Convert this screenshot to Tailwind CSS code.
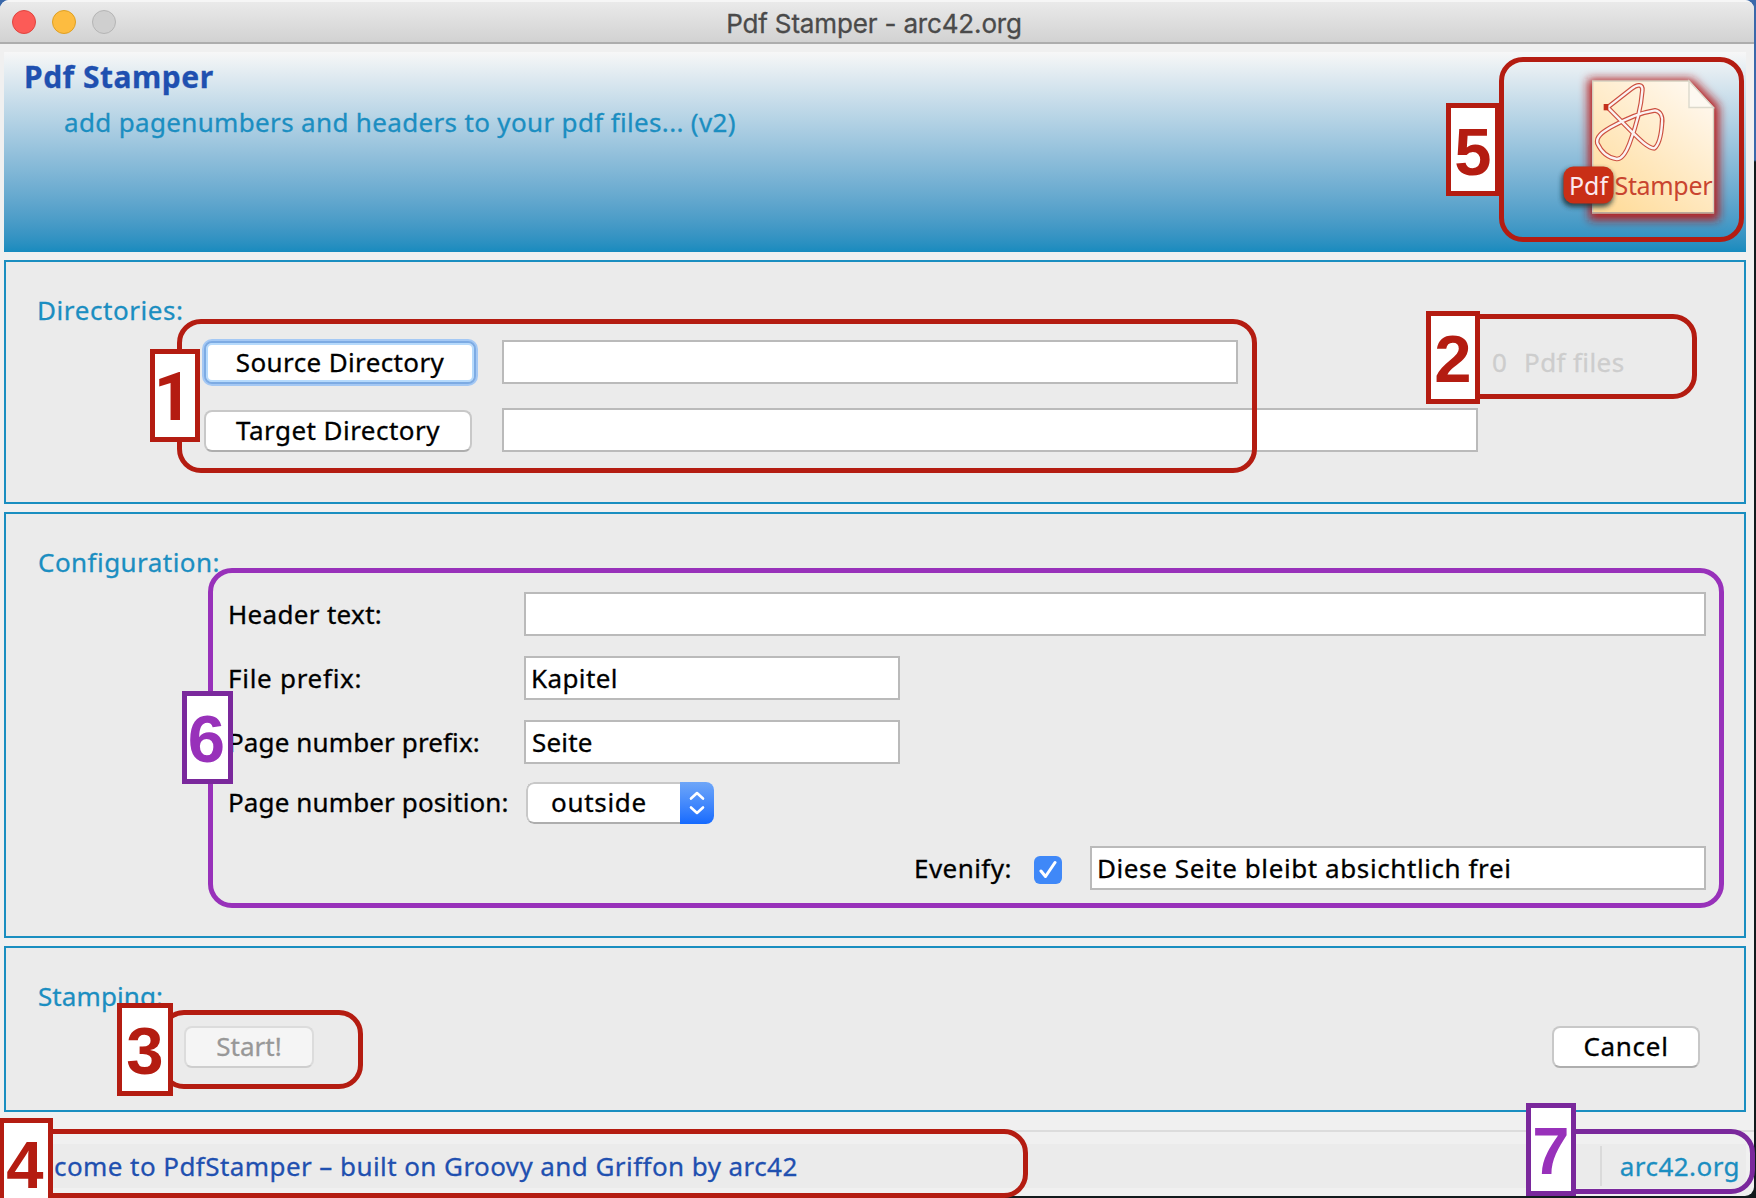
<!DOCTYPE html>
<html lang="en">
<head>
<meta charset="utf-8">
<title>Pdf Stamper - arc42.org</title>
<script src="https://cdn.jsdelivr.net/npm/@tailwindcss/browser@4"></script>
</head>
<body class="overflow-hidden">
<div class="relative w-[1756px] h-[1198px] overflow-hidden bg-linear-to-b from-[#3a68aa] from-[160px] to-[#121a1c] to-[162px] font-['Noto_Sans',sans-serif] text-[26px] leading-9 text-black whitespace-nowrap">

  <!-- application window -->
  <div class="w-[1754px] h-[1196px] flex flex-col bg-[#f0f0f0] rounded-t-[9px] rounded-br-[9px] overflow-hidden [-webkit-text-stroke:0.3px]">
    <header class="relative h-11 shrink-0 flex items-center justify-center border-t-2 border-t-[#f6f6f6] border-b-2 border-b-[#adadad] bg-linear-to-b from-[#eaeaea] to-[#d2d2d2]">
      <div class="absolute left-3 top-2 flex gap-4">
        <span class="size-6 rounded-full bg-[#fc5b57] border border-[#e0443e]"></span>
        <span class="size-6 rounded-full bg-[#fdbc40] border border-[#dfa023]"></span>
        <span class="size-6 rounded-full bg-[#cfcfcf] border border-[#b5b5b5]"></span>
      </div>
      <h1 class="font-['Inter',sans-serif] text-[26px] tracking-[-0.16px] text-[#4a4a4a] pt-[3px] pr-1.5">Pdf Stamper - arc42.org</h1>
    </header>

    <main class="flex flex-col gap-2 pt-2 pl-1 pr-2">
      <!-- banner -->
      <section class="h-[200px] flex justify-between bg-linear-to-b from-[#f7f7f7] to-[#178bbe]">
        <div class="pl-5 pt-[5px]">
          <h2 class="text-[30px] leading-10 font-bold text-[#1f50b0] tracking-[0.5px]">Pdf Stamper</h2>
          <p class="mt-[7px] ml-10 text-[#1b8ec1] tracking-[0.34px]">add pagenumbers and headers to your pdf files... (v2)</p>
        </div>
        <svg class="mt-2 mr-4 overflow-visible" width="180" height="170" viewBox="1550 60 180 170">
          <defs>
            <linearGradient id="paper" x1="0.1" y1="1" x2="0.8" y2="0">
              <stop offset="0" stop-color="#ffdb98"/>
              <stop offset="1" stop-color="#fff8ef"/>
            </linearGradient>
            <filter id="glow" x="-20%" y="-20%" width="140%" height="140%"><feGaussianBlur stdDeviation="5"/></filter>
            <filter id="soft" x="-30%" y="-30%" width="160%" height="160%"><feGaussianBlur stdDeviation="2.5"/></filter>
          </defs>
          <path d="M1588 79H1692L1719 106V220H1589Z" fill="#b81c1c" filter="url(#glow)"/>
          <path d="M1592.7 81H1689L1713.5 108V212.7H1592.7Z" fill="url(#paper)" stroke="#d5cfc0" stroke-width="1.4"/>
          <path d="M1592 212.7H1714" stroke="#b9a99a" stroke-width="1.4"/>
          <path d="M1689 81V107.5H1713.5Z" fill="#fdf9f1" stroke="#dcd9cc" stroke-width="1.4"/>
          <g transform="translate(1540 70) scale(.33333)" fill="none" stroke-linejoin="round">
            <path d="M203 112L275 56C292 42 309 42 307 62C303 115 290 165 268 222C258 248 247 268 230 267C205 264 184 246 172 220C168 200 185 188 212 172C250 150 300 128 345 121C362 124 369 140 366 160C364 190 360 222 343 235C325 235 300 210 272 182L203 112" stroke="#cc5040" stroke-width="14"/>
            <path d="M203 112L275 56C292 42 309 42 307 62C303 115 290 165 268 222C258 248 247 268 230 267C205 264 184 246 172 220C168 200 185 188 212 172C250 150 300 128 345 121C362 124 369 140 366 160C364 190 360 222 343 235C325 235 300 210 272 182L203 112" stroke="#fbf3f3" stroke-width="7"/>
            <rect x="191" y="102" width="14" height="19" fill="#c5301a"/>
          </g>
          <rect x="1562" y="169" width="51" height="38" rx="10" fill="#1c3038" opacity=".85" filter="url(#soft)"/>
          <rect x="1563.500" y="166.500" width="50" height="37" rx="10" fill="#c92f16"/>
          <text x="1569" y="195" font-family="Noto Sans" font-size="25" fill="#fbe9ee" textLength="39">Pdf</text>
          <text x="1614.500" y="195" font-family="Noto Sans" font-size="25" fill="#c9442f" textLength="98">Stamper</text>
        </svg>
      </section>

      <!-- directories -->
      <section class="h-[244px] border-2 border-[#1a8ec0] bg-[#ebebeb] pt-[30px]">
        <h3 class="ml-[31px] text-[#1b8ec1] tracking-[0.58px]">Directories:</h3>
        <div class="mt-[12px] ml-[198px] h-11 flex items-center">
          <button class="w-[272px] h-[43px] rounded-[8px] bg-white border-2 border-[#7dabe3] shadow-[0_0_0_2px_#a4c8f4,inset_0_0_0_2px_#b6dafc] tracking-[0.37px]">Source Directory</button>
          <div class="ml-[26px] w-[736px] h-11 bg-white border-2 border-[#bababa]"></div>
          <span class="ml-[254px] w-[32px] text-[#cdcdcd]">0</span>
          <span class="text-[#cdcdcd] tracking-[0.4px]">Pdf files</span>
        </div>
        <div class="mt-6 ml-[198px] h-11 flex items-center">
          <button class="mt-0.5 w-[268px] h-[42px] rounded-[8px] bg-white border-2 border-[#c8c8c8] border-b-[#aeaeae] pb-0.5 tracking-[0.46px]">Target Directory</button>
          <div class="ml-[30px] w-[976px] h-11 bg-white border-2 border-[#bababa]"></div>
        </div>
      </section>

      <!-- configuration -->
      <section class="h-[426px] border-2 border-[#1a8ec0] bg-[#ebebeb] pt-[30px]">
        <h3 class="ml-8 text-[#1b8ec1] tracking-[0.45px]">Configuration:</h3>
        <div class="mt-3 ml-[222px] flex flex-col gap-5">
          <div class="h-11 flex items-center">
            <span class="w-[296px] tracking-[0.32px]">Header text:</span>
            <div class="w-[1182px] h-11 bg-white border-2 border-[#bababa]"></div>
          </div>
          <div class="h-11 flex items-center">
            <span class="w-[296px] tracking-[0.72px]">File prefix:</span>
            <div class="w-[376px] h-11 flex items-center bg-white border-2 border-[#bababa] pl-[5px] tracking-[0.4px]">Kapitel</div>
          </div>
          <div class="h-11 flex items-center">
            <span class="w-[296px] tracking-[0.12px]">Page number prefix:</span>
            <div class="w-[376px] h-11 flex items-center bg-white border-2 border-[#bababa] pl-1.5 tracking-[0.2px]">Seite</div>
          </div>
        </div>
        <div class="mt-[18px] ml-[222px] h-[42px] flex items-center">
          <span class="w-[298px] pb-0.5 tracking-[0.12px]">Page number position:</span>
          <div class="w-[188px] h-[42px] flex rounded-[8px] overflow-hidden bg-white">
            <div class="w-[154px] rounded-l-[8px] border-2 border-r-0 border-[#c8c8c8] border-b-[#aeaeae] pl-[23px] tracking-[0.7px]">outside</div>
            <div class="w-[34px] flex items-center justify-center bg-linear-to-b from-[#6ea6f8] to-[#146afe]">
              <svg width="16" height="24" viewBox="0 0 16 24" fill="none" stroke="white" stroke-width="2.600" stroke-linecap="round" stroke-linejoin="round"><path d="M2 7.500L8 2L14 7.500M2 16.500L8 22L14 16.500"/></svg>
            </div>
          </div>
        </div>
        <div class="mt-[22px] h-11 flex items-center pl-[908px]">
          <span class="w-[120px] tracking-[0.45px]">Evenify:</span>
          <span class="mt-1 size-7 rounded-[6px] bg-[#3f88f8] flex items-center justify-center">
            <svg width="18" height="20" viewBox="0 0 18 20" fill="none" stroke="white" stroke-width="3" stroke-linecap="round" stroke-linejoin="round"><path d="M2 11L6.500 16.500L16 2.500"/></svg>
          </span>
          <div class="ml-7 w-[616px] h-11 flex items-center bg-white border-2 border-[#bababa] pl-[5px] tracking-[0.59px]">Diese Seite bleibt absichtlich frei</div>
        </div>
      </section>

      <!-- stamping -->
      <section class="h-[166px] border-2 border-[#1a8ec0] bg-[#ebebeb] pt-[30px]">
        <h3 class="ml-8 text-[#1b8ec1] tracking-[0.1px]">Stamping:</h3>
        <div class="mt-3 pl-[178px] pr-11 flex justify-between">
          <button class="w-[130px] h-[42px] rounded-[8px] bg-[#f5f5f5] border-2 border-[#dcdcdc] border-b-[#cecece] pb-0.5 text-[#989898]">Start!</button>
          <button class="w-[148px] h-[42px] rounded-[8px] bg-white border-2 border-[#c8c8c8] border-b-[#aeaeae] pb-0.5 tracking-[0.7px]">Cancel</button>
        </div>
      </section>
    </main>

    <!-- status bar -->
    <footer class="mt-[18px] border-t-2 border-[#dcdcdc] pt-3 pl-1 pr-2">
      <div class="h-11 bg-[#ebebeb] flex items-center justify-between pl-[50px] pr-1.5">
        <span class="text-[#1f50b0] tracking-[0.43px]">come to PdfStamper – built on Groovy and Griffon by arc42</span>
        <div class="flex items-center h-10 border-l-2 border-[#dadada] pl-[18px]">
          <span class="text-[#1b8ec1] tracking-[0.45px]">arc42.org</span>
        </div>
      </div>
    </footer>
  </div>

  <!-- callouts over the window -->
  <div class="font-['Liberation_Sans',Arial,sans-serif] font-bold text-[67px]">
    <div class="absolute left-[177px] top-[319px] w-[1080px] h-[154px] border-[5px] border-[#b41c11] rounded-[24px]"></div>
    <div class="absolute left-[150px] top-[349px] w-[50px] h-[93px] border-[5px] border-[#b41c11] bg-white text-[#b41c11] flex items-center justify-center pr-1 pt-0.5 font-['Roboto',sans-serif]">1</div>

    <div class="absolute left-[1440px] top-[314px] w-[257px] h-[85px] border-[5px] border-[#b41c11] rounded-[24px]"></div>
    <div class="absolute left-[1426px] top-[311px] w-[54px] h-[93px] border-[5px] border-[#b41c11] bg-white text-[#b41c11] flex items-center justify-center pt-[3px]">2</div>

    <div class="absolute left-[160px] top-[1010px] w-[203px] h-[79px] border-[5px] border-[#b41c11] rounded-[24px]"></div>
    <div class="absolute left-[117px] top-[1003px] w-[56px] h-[93px] border-[5px] border-[#b41c11] bg-white text-[#b41c11] flex items-center justify-center pt-[3px]">3</div>

    <div class="absolute left-[10px] top-[1129px] w-[1018px] h-[69px] border-[5px] border-[#b41c11] rounded-[24px]"></div>
    <div class="absolute -left-[1px] top-[1118px] w-[54px] h-[93px] border-[5px] border-[#b41c11] bg-white text-[#b41c11] flex items-center justify-center pr-0.5">4</div>

    <div class="absolute left-[1499px] top-[57px] w-[245px] h-[185px] border-[5px] border-[#b41c11] rounded-[24px]"></div>
    <div class="absolute left-[1446px] top-[103px] w-[54px] h-[93px] border-[5px] border-[#b41c11] bg-white text-[#b41c11] flex items-center justify-center pt-1">5</div>

    <div class="absolute left-[208px] top-[568px] w-[1516px] h-[340px] border-[5px] border-[#9831ba] rounded-[24px]"></div>
    <div class="absolute left-[182px] top-[691px] w-[51px] h-[93px] border-[5px] border-[#7a289c] bg-white text-[#9831ba] flex items-center justify-center pt-0.5 pr-0.5">6</div>

    <div class="absolute left-[1545px] top-[1129px] w-[210px] h-[65px] border-[5px] border-[#7a289c] rounded-[24px]"></div>
    <div class="absolute left-[1526px] top-[1103px] w-[50px] h-[93px] border-[5px] border-[#7a289c] bg-white text-[#9831ba] flex items-center justify-center pt-0.5">7</div>
  </div>
</div>
</body>
</html>
